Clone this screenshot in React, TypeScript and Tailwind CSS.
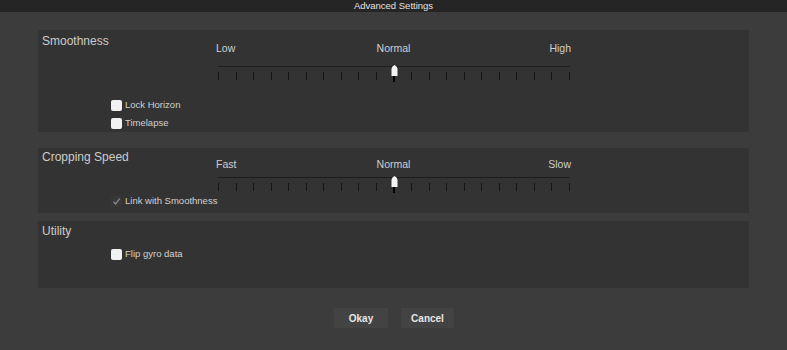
import React from 'react';

const FONT = { fontFamily: '"Liberation Sans", Arial, sans-serif' };

const TICKS = Array.from({ length: 21 }, (_, i) => i);

function Thumb() {
  return (
    <div className="absolute flex flex-col items-center" style={{ left: 'calc(50% - 3.5px)', top: -1 }}>
      <svg width="7" height="11" viewBox="0 0 7 11">
        <path d="M0.5 4 Q0.5 1.5 3.5 0 Q6.5 1.5 6.5 4 L6.5 11 L0.5 11 Z" fill="#f4f4f4" />
      </svg>
      <div className="w-[2px] h-[6px] bg-black" />
    </div>
  );
}

function Slider({ labels, gap }: { labels: [string, string, string]; gap: number }) {
  return (
    <div className="w-[355px]">
      <div className="grid grid-cols-3 text-[10.5px] leading-[14px] text-[#cfcfcf]">
        <span className="text-left">{labels[0]}</span>
        <span className="text-center">{labels[1]}</span>
        <span className="text-right">{labels[2]}</span>
      </div>
      <div className={gap > 8 ? 'pt-[11px]' : 'pt-[6px]'}>
        <div className="relative ml-[2px] w-[352px]">
          <div className="h-px bg-[#1e1e1e]" />
          <div className="flex justify-between pt-[5px]">
            {TICKS.map((t) => (
              <div key={t} className={t === 10 ? 'w-px h-[8px]' : 'w-px h-[8px] bg-[#151515]'} />
            ))}
          </div>
          <Thumb />
        </div>
      </div>
    </div>
  );
}

function Check({ label, checked, disabled }: { label: string; checked?: boolean; disabled?: boolean }) {
  return (
    <label className="flex items-center gap-[3px] h-[14px] text-[9.5px] text-[#d2d2d2]">
      {disabled ? (
        <span className="w-[11px] h-[11px] rounded-[2px] bg-[#383838] flex items-center justify-center">
          {checked && (
            <svg width="9" height="9" viewBox="0 0 9 9">
              <path d="M1.5 4.8 L3.6 7 L7.6 1.6" stroke="#8a8a8a" strokeWidth="1.3" fill="none" />
            </svg>
          )}
        </span>
      ) : (
        <span className="w-[11px] h-[11px] rounded-[2px] bg-[#f2f2f2]" />
      )}
      <span>{label}</span>
    </label>
  );
}

export default function App() {
  return (
    <div className="w-[787px] h-[350px] bg-[#3c3c3c] flex flex-col overflow-hidden" style={FONT}>
      <div className="h-[12px] bg-[#252525] flex items-center justify-center text-[9.5px] leading-[12px] text-[#e2e2e2]">
        Advanced Settings
      </div>

      <div className="px-[38px] pt-[18px] flex flex-col">
        <section className="h-[102px] bg-[#333333] pl-[4px] pt-[3px] flex flex-col">
          <div className="flex">
            <h3 className="w-[174px] text-[12px] leading-[16px] text-[#cccccc]">Smoothness</h3>
            <div className="mt-[8px]">
              <Slider labels={['Low', 'Normal', 'High']} gap={11} />
            </div>
          </div>
          <div className="ml-[69px] mt-[18px] flex flex-col gap-[4px]">
            <Check label="Lock Horizon" />
            <Check label="Timelapse" />
          </div>
        </section>

        <section className="mt-[16px] h-[65px] bg-[#333333] pl-[4px] pt-[1px] flex flex-col">
          <div className="flex">
            <h3 className="w-[174px] text-[12px] leading-[16px] text-[#cccccc]">Cropping Speed</h3>
            <div className="mt-[8px]">
              <Slider labels={['Fast', 'Normal', 'Slow']} gap={6} />
            </div>
          </div>
          <div className="ml-[69px] mt-[3px] flex flex-col">
            <Check label="Link with Smoothness" checked disabled />
          </div>
        </section>

        <section className="mt-[8px] h-[67px] bg-[#333333] pl-[4px] pt-[2px] flex flex-col">
          <h3 className="text-[12px] leading-[16px] text-[#cccccc]">Utility</h3>
          <div className="ml-[69px] mt-[8px] flex flex-col">
            <Check label="Flip gyro data" />
          </div>
        </section>

        <div className="mt-[20px] flex justify-center gap-[13px] pl-[1px]">
          <button type="button" className="w-[54px] h-[20px] bg-[#434343] text-[10px] font-bold text-[#e6e6e6]">
            Okay
          </button>
          <button type="button" className="w-[53px] h-[20px] bg-[#434343] text-[10px] font-bold text-[#e6e6e6]">
            Cancel
          </button>
        </div>
      </div>
    </div>
  );
}
